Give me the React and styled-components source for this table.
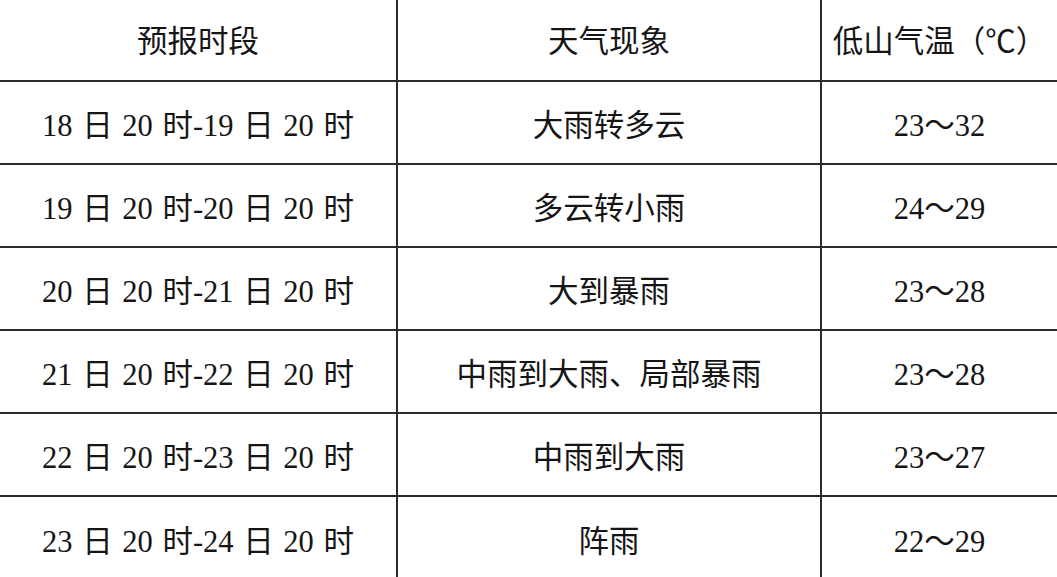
import React from "react";
import styled, { createGlobalStyle } from "styled-components";

const Global = createGlobalStyle`
  html, body { margin: 0; padding: 0; background: #fff; }
  body { overflow: hidden; }
`;

const Table = styled.div`
  display: grid;
  grid-template-columns: 398px 424px 1fr;
  grid-auto-rows: 83px;
  grid-template-rows: 82px;
  width: 1057px;
  height: 577px;
  overflow: hidden;
  font-family: "Liberation Serif", "Noto Sans CJK SC", serif;
  font-size: 30.5px;
  color: #151515;
`;

const Cell = styled.div`
  display: flex;
  align-items: center;
  justify-content: center;
  box-sizing: border-box;
  border-bottom: ${(p) => (p.$last ? "none" : "2px solid #2a2a2a")};
  border-right: ${(p) => (p.$edge ? "none" : "2px solid #2a2a2a")};
  padding-bottom: ${(p) => (p.$head ? "2px" : "0")};
  word-spacing: ${(p) => (p.$wide ? "2px" : "0")};
  white-space: pre;
`;

const header = ["预报时段", "天气现象", "低山气温（℃）"];
const rows = [
  ["18 日 20 时-19 日 20 时", "大雨转多云", "23～32"],
  ["19 日 20 时-20 日 20 时", "多云转小雨", "24～29"],
  ["20 日 20 时-21 日 20 时", "大到暴雨", "23～28"],
  ["21 日 20 时-22 日 20 时", "中雨到大雨、局部暴雨", "23～28"],
  ["22 日 20 时-23 日 20 时", "中雨到大雨", "23～27"],
  ["23 日 20 时-24 日 20 时", "阵雨", "22～29"],
];

export default function App() {
  return (
    <>
      <Global />
      <Table>
        {header.map((h, i) => (
          <Cell key={"h" + i} $head $edge={i === 2}>
            {h}
          </Cell>
        ))}
        {rows.map((r, ri) =>
          r.map((c, ci) => (
            <Cell
              key={ri + "-" + ci}
              $wide={ci === 0}
              $edge={ci === 2}
              $last={ri === rows.length - 1}
            >
              {c}
            </Cell>
          ))
        )}
      </Table>
    </>
  );
}
